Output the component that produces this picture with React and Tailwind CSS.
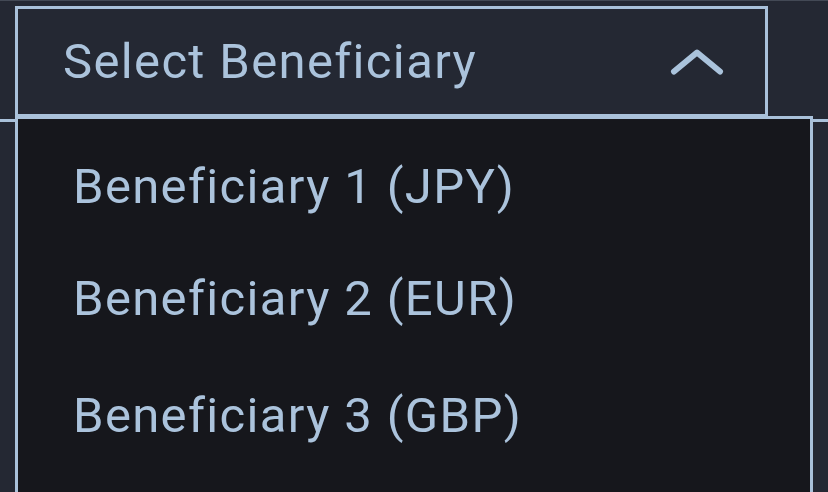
const beneficiaries = [
  { label: "Beneficiary 1 (JPY)", h: "h-[112px]" },
  { label: "Beneficiary 2 (EUR)", h: "h-[117px]" },
  { label: "Beneficiary 3 (GBP)", h: "h-[117px]" },
];

function ChevronUp() {
  return (
    <svg width="58" height="32" viewBox="0 0 58 32" fill="none" className="shrink-0">
      <path
        d="M6 25.5 L29 6.5 L52 25.5"
        stroke="#aac3dc"
        strokeWidth="6"
        strokeLinecap="round"
        strokeLinejoin="round"
      />
    </svg>
  );
}

export default function App() {
  return (
    <div
      className="relative h-[492px] w-[828px] overflow-hidden bg-[#242833] text-[#abc3dc]"
      style={{ fontFamily: "Roboto, 'Noto Sans', sans-serif" }}
    >
      {/* header with the select trigger */}
      <div className="h-[122px] border-t border-b-[3px] border-t-[#434955] border-b-[#a9c1da] pl-[15px] pt-[5px]">
        <button className="flex h-[111px] w-[753px] items-center justify-between border-[3px] border-[#a9c1da] bg-[#242833] pl-[45px] pr-[39px] text-left">
          <span className="text-[49px] leading-none tracking-[1.35px]">Select Beneficiary</span>
          <ChevronUp />
        </button>
      </div>

      {/* open dropdown menu */}
      <div className="absolute left-[15px] top-[116px] h-[400px] w-[798px] border-[3px] border-[#a9c1da] bg-[#16171c]">
        <ul className="pt-[43px] pl-[55px]">
          {beneficiaries.map((b) => (
            <li key={b.label} className={`${b.h} text-[49px] leading-none tracking-[1.35px]`}>
              {b.label}
            </li>
          ))}
        </ul>
      </div>
    </div>
  );
}
